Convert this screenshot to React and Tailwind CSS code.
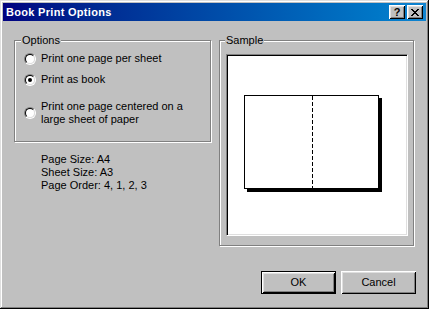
import React from "react";

const font = { fontFamily: '"Liberation Sans", Arial, sans-serif' };

function Radio({ checked }) {
  return (
    <div className="w-[12px] h-[12px] shrink-0 rounded-full border border-t-[#808080] border-l-[#808080] border-r-white border-b-white">
      <div className="w-[10px] h-[10px] rounded-full border border-t-black border-l-black border-r-[#dfdfdf] border-b-[#dfdfdf] bg-white flex items-center justify-center">
        {checked && <div className="w-[4px] h-[4px] rounded-full bg-black" />}
      </div>
    </div>
  );
}

function GroupBox({ label, labelLeft, className, children }) {
  return (
    <div
      className={
        "relative border border-[#808080] shadow-[inset_1px_1px_0_#fff,1px_1px_0_#fff] " +
        className
      }
    >
      <div className={"absolute top-[-7px] px-[1px] bg-[#c0c0c0] leading-[13px] " + labelLeft}>
        {label}
      </div>
      {children}
    </div>
  );
}

function TitleButton({ children }) {
  return (
    <div className="w-[16px] h-[14px] bg-[#c0c0c0] flex items-center justify-center shadow-[inset_1px_1px_0_#fff,inset_-1px_-1px_0_#000,inset_2px_2px_0_#dfdfdf,inset_-2px_-2px_0_#808080]">
      {children}
    </div>
  );
}

export default function App() {
  return (
    <div
      className="w-[429px] h-[309px] bg-[#c0c0c0] p-[3px] flex flex-col text-[11px] text-black shadow-[inset_-1px_-1px_0_#000,inset_1px_1px_0_#dfdfdf,inset_-2px_-2px_0_#808080,inset_2px_2px_0_#fff]"
      style={font}
    >
      {/* Title bar */}
      <div className="h-[18px] bg-linear-to-r from-[#000080] to-[#1084d0] flex items-center pl-[3px] pr-[3px]">
        <div className="text-white font-bold text-[11px] tracking-[0.3px] leading-[13px] flex-1">Book Print Options</div>
        <div className="flex items-center gap-[2px]">
          <TitleButton>
            <span className="font-bold text-[11px] leading-[11px] text-black mt-[1px]">?</span>
          </TitleButton>
          <TitleButton>
            <svg width="8" height="7" viewBox="0 0 8 7" className="mt-[1px]">
              <path d="M0 0 L7 7 M1 0 L8 7 M7 0 L0 7 M8 0 L1 7" stroke="#000" strokeWidth="1" />
            </svg>
          </TitleButton>
        </div>
      </div>

      {/* Body */}
      <div className="flex-1 flex flex-col pl-[11px] pr-[10px]">
        <div className="flex gap-[7px] mt-[19px]">
          {/* Left column */}
          <div className="w-[198px] flex flex-col">
            <GroupBox label="Options" labelLeft="left-[6px]" className="w-[197px] h-[102px]">
              <div className="flex flex-col pt-[11px] pl-[9px] leading-[13px]">
                <div className="flex items-center gap-[5px]">
                  <Radio />
                  <span>Print one page per sheet</span>
                </div>
                <div className="flex items-center gap-[5px] mt-[8px]">
                  <Radio checked />
                  <span>Print as book</span>
                </div>
                <div className="flex items-center gap-[5px] mt-[14px]">
                  <Radio />
                  <span>
                    Print one page centered on a
                    <br />
                    large sheet of paper
                  </span>
                </div>
              </div>
            </GroupBox>
            <div className="mt-[11px] pl-[27px] leading-[13px] flex flex-col">
              <span>Page Size: A4</span>
              <span>Sheet Size: A3</span>
              <span>Page Order: 4, 1, 2, 3</span>
            </div>
          </div>

          {/* Right column */}
          <GroupBox label="Sample" labelLeft="left-[5px]" className="w-[195px] h-[206px]">
            <div className="ml-[6px] mt-[13px] w-[182px] h-[182px] bg-white border border-t-[#808080] border-l-[#808080] border-r-white border-b-white shadow-[inset_1px_1px_0_#000,inset_-1px_-1px_0_#dfdfdf] pl-[17px] pt-[40px]">
              <div className="relative w-[135px] h-[94px] border border-black bg-white shadow-[3px_3px_0_#000]">
                <svg
                  className="absolute left-[67px] top-0"
                  width="1"
                  height="92"
                  viewBox="0 0 1 92"
                >
                  <line x1="0.5" y1="0" x2="0.5" y2="92" stroke="#000" strokeWidth="1" strokeDasharray="4 2" />
                </svg>
              </div>
            </div>
          </GroupBox>
        </div>

        {/* Buttons */}
        <div className="flex justify-end gap-[5px] mt-[25px]">
          <div className="w-[75px] h-[23px] border border-black flex items-center justify-center shadow-[inset_1px_1px_0_#fff,inset_-1px_-1px_0_#000,inset_2px_2px_0_#dfdfdf,inset_-2px_-2px_0_#808080] leading-[13px]">
            OK
          </div>
          <div className="w-[75px] h-[23px] flex items-center justify-center shadow-[inset_1px_1px_0_#fff,inset_-1px_-1px_0_#000,inset_2px_2px_0_#dfdfdf,inset_-2px_-2px_0_#808080] leading-[13px]">
            Cancel
          </div>
        </div>
      </div>
    </div>
  );
}
